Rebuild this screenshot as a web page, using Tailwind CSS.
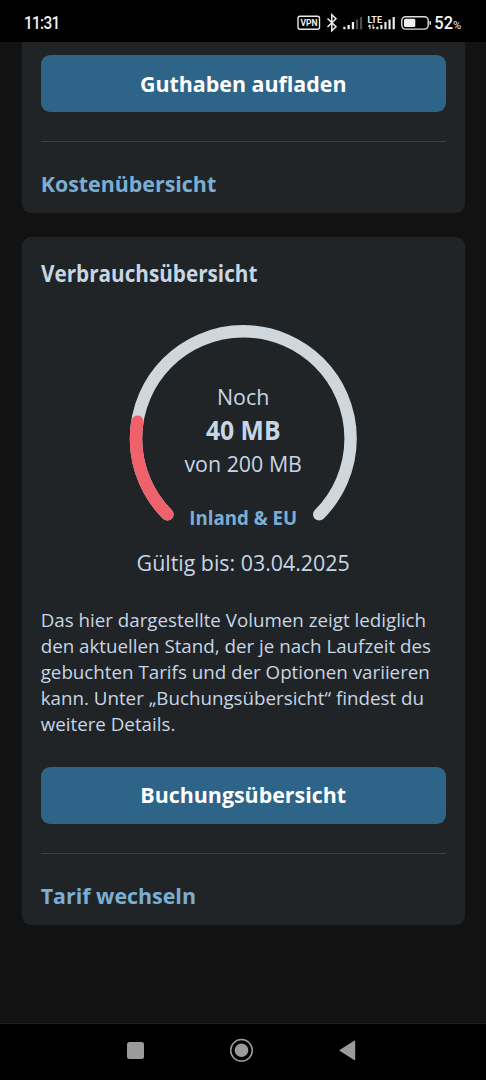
<!DOCTYPE html>
<html lang="de">
<head>
<meta charset="utf-8">
<title>Verbrauchsübersicht</title>
<script src="https://cdn.jsdelivr.net/npm/@tailwindcss/browser@4"></script>
</head>
<body class="bg-[#121212]">
<div class="flex h-[1080px] w-[486px] flex-col overflow-hidden bg-[#121212] font-['Open_Sans',sans-serif] text-[#c6d6e5]">
  <header class="flex h-[42px] shrink-0 items-center justify-between bg-black pt-1 pr-[24px] pl-[24px] text-[#f0f0f0]">
    <span class="origin-left scale-x-[0.88] font-['Roboto',sans-serif] text-[17.5px] leading-5 font-medium tracking-[-0.8px]">11:31</span>
    <svg class="h-[22px] w-[165px]" viewBox="297 12 165 22" fill="none">
      <rect x="298" y="16.2" width="21.5" height="13" rx="2" stroke="#e8e8e8" stroke-width="1.4"/>
      <text x="300.5" y="26.4" font-family="Roboto" font-weight="700" font-size="9.6" fill="#eee" textLength="17" lengthAdjust="spacingAndGlyphs">VPN</text>
      <path d="M327.5 18.5l8.5 8.3-4.2 3.9V14.8l4.2 3.9-8.5 8.3" stroke="#eee" stroke-width="1.5"/>
      <g fill="#eee"><rect x="343.3" y="26.8" width="2.2" height="2.4"/><rect x="347.5" y="25" width="2.3" height="4.2"/><rect x="351.8" y="22" width="2.3" height="7.2"/></g>
      <g fill="#4c4c4c"><rect x="356" y="19.5" width="2.2" height="9.7"/><rect x="360" y="17" width="2.2" height="12.2"/></g>
      <text x="367.5" y="22.6" font-family="Roboto" font-weight="700" font-size="8.8" fill="#eee" textLength="14.5" lengthAdjust="spacingAndGlyphs">LTE</text>
      <path d="M370 29.2V25M368.4 26.6l1.6-1.8M373 24.5v4.2M374.6 27.2l-1.6 1.8" stroke="#eee" stroke-width="1.1"/>
      <g fill="#eee"><rect x="376.3" y="26.8" width="2.1" height="2.4"/><rect x="380.3" y="25" width="2.1" height="4.2"/><rect x="384.4" y="22" width="2.1" height="7.2"/><rect x="388.5" y="19.5" width="2.1" height="9.7"/><rect x="392.6" y="17" width="2.2" height="12.2"/></g>
      <rect x="401.8" y="16.7" width="26.4" height="12.4" rx="3.8" stroke="#ddd" stroke-width="1.4"/>
      <rect x="404" y="18.8" width="11.3" height="8.2" rx="1.5" fill="#eee"/>
      <path d="M430.2 21.2v3.6" stroke="#ddd" stroke-width="1.6"/>
      <text x="434.3" y="29.4" font-family="Roboto" font-weight="500" font-size="17.5" fill="#f4f4f4" textLength="18.7" lengthAdjust="spacingAndGlyphs">52</text>
      <text x="453" y="29.2" font-family="Roboto" font-size="10" fill="#eee" textLength="8.3" lengthAdjust="spacingAndGlyphs">%</text>
    </svg>
  </header>

  <main class="flex grow flex-col pr-[21.3px] pl-[21.7px]">
    <section class="h-[171.3px] rounded-b-[9px] bg-[#212427] px-[19px] pt-[13px]">
      <button class="block h-[57px] w-full rounded-[9px] bg-[#2d6487] pt-[2px] text-[21.4px] font-bold text-white">Guthaben aufladen</button>
      <div class="mt-[29px] h-px bg-[#3a3f42]"></div>
      <a class="mt-[28px] block text-[21.4px] leading-7 font-bold text-[#7baed3]">Kostenübersicht</a>
    </section>

    <section class="mt-[24px] flex h-[687.7px] flex-col rounded-[9px] bg-[#212427] px-[19px]">
      <h2 class="mt-[21px] origin-left scale-x-[0.9] text-[23px] leading-[30px] font-bold whitespace-nowrap">Verbrauchsübersicht</h2>
      <div class="relative mx-auto mt-[35px] h-[204px] w-[230px] shrink-0 text-center">
        <svg class="absolute inset-0 h-[204px] w-[230px]" viewBox="128.1 323 230 204" fill="none" stroke-width="12.4" stroke-linecap="round">
          <path d="M167.5 514.4A107.3 107.3 0 1 1 319.3 514.4" stroke="#cfd6dc"/>
          <path d="M167.5 514.4A107.3 107.3 0 0 1 137.4 421.7" stroke="#f0626b"/>
        </svg>
        <div class="relative flex flex-col items-center pt-[57px]">
          <span class="text-[21.4px] leading-[34px]">Noch</span>
          <span class="scale-x-[0.95] text-[26px] leading-[33px] font-bold whitespace-nowrap">40 MB</span>
          <span class="text-[21.4px] leading-[34px]">von 200 MB</span>
          <a class="mt-[22px] text-[18.7px] leading-[30px] font-bold text-[#7baed3]">Inland &amp; EU</a>
        </div>
      </div>
      <p class="mt-[20px] text-center text-[21.4px] leading-[32px]">Gültig bis: 03.04.2025</p>
      <p class="mt-[27.3px] text-[18.75px] leading-[26.2px] whitespace-nowrap">Das hier dargestellte Volumen zeigt lediglich<br>den aktuellen Stand, der je nach Laufzeit des<br>gebuchten Tarifs und der Optionen variieren<br>kann. Unter „Buchungsübersicht“ findest du<br>weitere Details.</p>
      <button class="mt-[29.4px] block h-[57px] w-full shrink-0 rounded-[9px] bg-[#2d6487] text-[21.4px] font-bold text-white">Buchungsübersicht</button>
      <div class="mt-[29px] h-px shrink-0 bg-[#3a3f42]"></div>
      <a class="mt-[27.5px] block text-[21.4px] leading-7 font-bold text-[#7baed3]">Tarif wechseln</a>
    </section>
  </main>

  <nav class="h-[57px] shrink-0 border-t border-[#1c1e20] bg-black">
    <svg class="h-[56px] w-[486px]" viewBox="0 1024 486 56" fill="#9b9b9b">
      <rect x="127" y="1042" width="17" height="17" rx="2.5"/>
      <circle cx="241.5" cy="1050.3" r="10.8" fill="none" stroke="#9b9b9b" stroke-width="1.5"/>
      <circle cx="241.5" cy="1050.3" r="6.8"/>
      <path d="M340.3 1050.4L354.5 1041.3V1059.5Z" stroke="#9b9b9b" stroke-width="1.4" stroke-linejoin="round"/>
    </svg>
  </nav>
</div>
</body>
</html>
